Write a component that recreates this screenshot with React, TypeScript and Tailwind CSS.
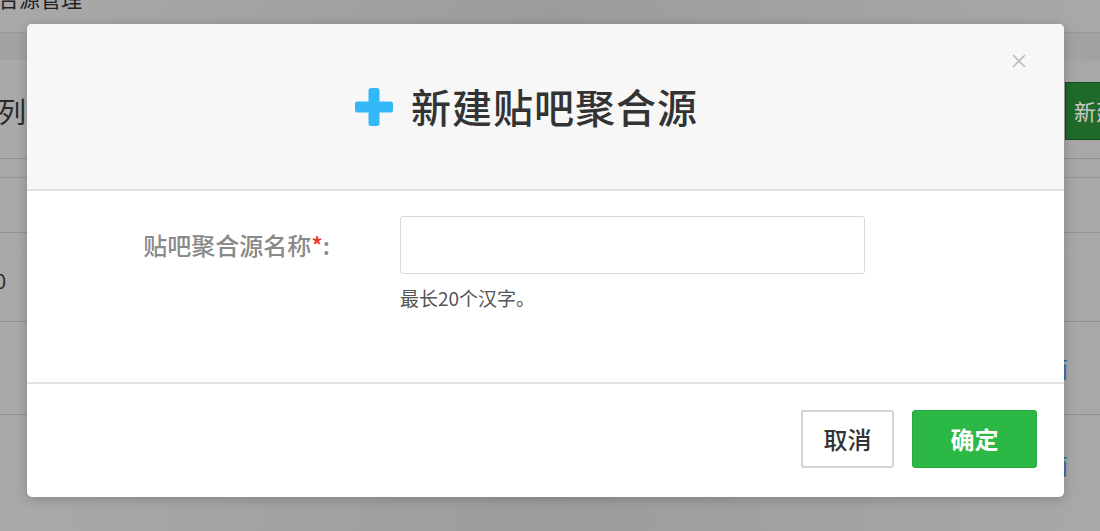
import { X } from 'lucide-react';

// Modal "新建贴吧聚合源" over a dimmed admin page.

const cjk = { fontFamily: '"Noto Sans CJK SC", "Noto Sans", sans-serif' };

function PlusIcon() {
  return (
    <svg width="38" height="38" viewBox="0 0 38 38" aria-hidden>
      <rect x="13.5" y="0" width="11" height="38" rx="2.5" fill="#33b7f6" />
      <rect x="0" y="13.5" width="38" height="11" rx="2.5" fill="#33b7f6" />
    </svg>
  );
}

function BackgroundPage() {
  return (
    <div className="w-full h-full bg-gradient-to-r from-[#a9a9a9] via-[#9c9c9c] to-[#a8a8a8] text-[#2a2a2a]">
      {/* breadcrumb bar */}
      <div className="h-[33px] border-b border-[#999] overflow-hidden">
        <div className="-ml-[2px] -mt-[14px] text-[21px] leading-[24px] text-[#222] whitespace-nowrap">合源管理</div>
      </div>
      <div className="h-[27px] bg-[#9e9e9e]/60" />
      {/* list header */}
      <div className="h-[99px] border-b border-[#8f8f8f] flex items-center justify-between overflow-hidden">
        <div className="-ml-[2px] text-[28px] leading-none mt-[4px] whitespace-nowrap">列表:</div>
        <div className="h-[58px] w-[90px] -mr-[55px] shrink-0 bg-[#1f6a29] border border-[#154a1c] flex items-center pl-[8px] text-[22px] text-[#c9c9c9] mt-[3px] whitespace-nowrap">
          新建
        </div>
      </div>
      <div className="h-[19px] border-b border-[#949494]" />
      <div className="h-[55px] border-b border-[#949494]" />
      <div className="h-[89px] border-b border-[#8f8f8f] flex items-center overflow-hidden">
        <span className="-ml-[16px] text-[20px] mt-[8px] whitespace-nowrap">10</span>
      </div>
      <div className="h-[93px] border-b border-[#8f8f8f] flex items-end justify-end">
        <span className="mr-[32px] mb-[30px] text-[22px] text-[#1f6fa8]">面</span>
      </div>
      <div className="h-[92px] flex items-start justify-end">
        <span className="mr-[32px] mt-[33px] text-[22px] text-[#1f6fa8]">面</span>
      </div>
    </div>
  );
}

export default function App() {
  return (
    <div className="relative w-[1100px] h-[531px] overflow-hidden" style={cjk}>
      <BackgroundPage />

      <div className="absolute left-[27px] top-[24px] w-[1037px] h-[473px] rounded-[5px] bg-white shadow-[0_2px_12px_rgba(0,0,0,0.2)] overflow-hidden flex flex-col">
        {/* header */}
        <div className="relative h-[167px] shrink-0 bg-[#f7f7f7] border-b-2 border-[#e2e2e2] flex items-center justify-center pr-[38px]">
          <PlusIcon />
          <h2 className="ml-[18px] text-[40px] leading-none font-medium text-[#333] tracking-[1px] mt-[-1px]">新建贴吧聚合源</h2>
          <button type="button" className="absolute right-[34px] top-[26px] text-[#bdbdbd]">
            <X size={22} strokeWidth={1.8} />
          </button>
        </div>

        {/* body */}
        <div className="h-[193px] shrink-0 border-b-2 border-[#e2e2e2] pt-[25px] flex">
          <div className="w-[303px] h-[58px] flex items-center justify-end text-[24px] font-medium text-[#8a8a8a]">
            贴吧聚合源名称<span className="text-[#f0322a]">*</span>:
          </div>
          <div className="ml-[70px] flex flex-col">
            <input className="w-[465px] h-[58px] border border-[#d9d9d9] rounded-[3px] bg-white outline-none" />
            <div className="mt-[11px] text-[19px] leading-[26px] text-[#555]">最长20个汉字。</div>
          </div>
        </div>

        {/* footer */}
        <div className="flex-1 flex items-start justify-end gap-[18px] pt-[26px] pr-[27px]">
          <button type="button" className="w-[93px] h-[58px] border-2 border-[#d3d3d3] rounded-[3px] bg-white text-[24px] font-medium text-[#333]">
            取消
          </button>
          <button type="button" className="w-[125px] h-[58px] rounded-[3px] bg-[#2bb845] border border-[#27a83f] text-[24px] font-bold text-white">
            确定
          </button>
        </div>
      </div>
    </div>
  );
}
